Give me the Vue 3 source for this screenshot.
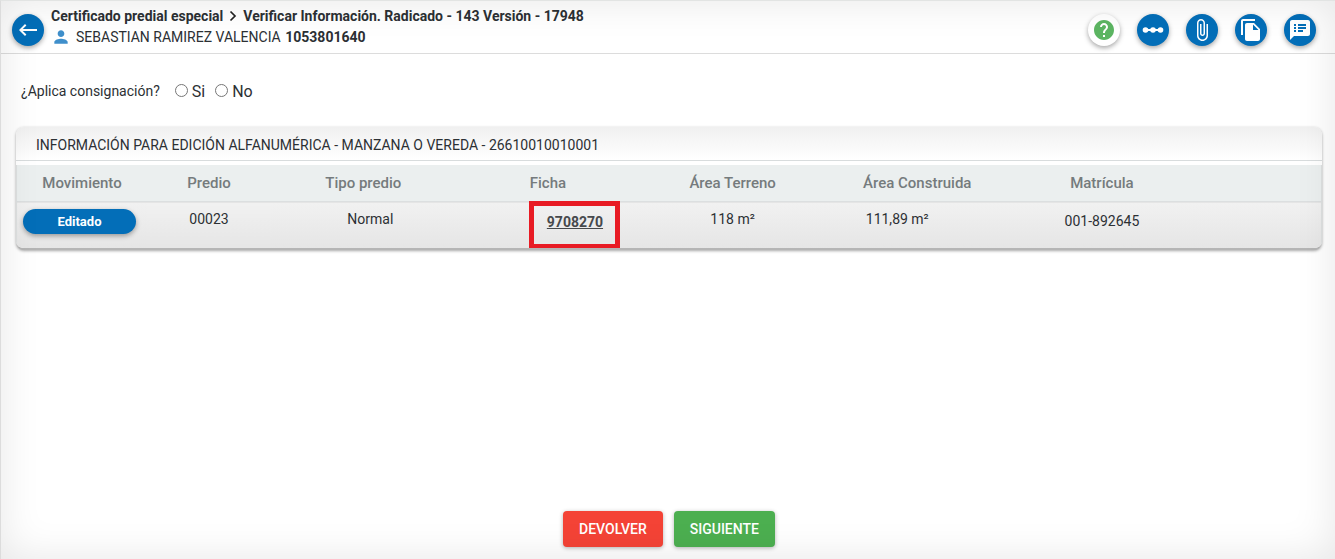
<script setup>
import { ref } from 'vue'

const consignacion = ref('')
const columns = ['Movimiento', 'Predio', 'Tipo predio', 'Ficha', 'Área Terreno', 'Área Construida', 'Matrícula']
const rows = [
  { predio: '00023', tipo: 'Normal', ficha: '9708270', terreno: '118 m²', construida: '111,89 m²', matricula: '001-892645' }
]
</script>

<template>
  <div class="page">
    <header class="topbar">
      <button class="round" type="button" aria-label="Volver">
        <svg width="24" height="24" viewBox="0 0 24 24"><path d="M21 10.900H6.800l3.600-3.500L9 6l-6 6 6 6 1.400-1.400-3.600-3.500H21z" /></svg>
      </button>
      <div class="titles">
        <h1 class="crumbs">
          <span>Certificado predial especial</span>
          <svg width="8" height="12" viewBox="0 0 8 12"><path d="M1.500 1.500L6 6l-4.500 4.500" fill="none" stroke="#222" stroke-width="1.700" /></svg>
          <span>Verificar Información. Radicado - 143 Versión - 17948</span>
        </h1>
        <div class="person">
          <svg width="20" height="20" viewBox="0 0 24 24"><path d="M12 12c2.210 0 4-1.790 4-4s-1.790-4-4-4-4 1.790-4 4 1.790 4 4 4zm0 2c-2.670 0-8 1.340-8 4v2h16v-2c0-2.660-5.330-4-8-4z" /></svg>
          <span>SEBASTIAN RAMIREZ VALENCIA <strong>1053801640</strong></span>
        </div>
      </div>
      <nav class="actions">
        <button class="round help" type="button" aria-label="Ayuda">
          <svg width="24" height="24" viewBox="0 0 24 24"><path d="M12 2C6.480 2 2 6.480 2 12s4.480 10 10 10 10-4.480 10-10S17.520 2 12 2zm1 17h-2v-2h2v2zm2.070-7.750l-.9.920C13.450 12.900 13 13.500 13 15h-2v-.5c0-1.100.45-2.100 1.170-2.830l1.240-1.260c.37-.36.59-.86.59-1.410 0-1.100-.9-2-2-2s-2 .9-2 2H8c0-2.210 1.790-4 4-4s4 1.790 4 4c0 .88-.36 1.680-.93 2.250z" /></svg>
        </button>
        <button class="round" type="button" aria-label="Flujo">
          <svg width="24" height="24" viewBox="0 0 24 24"><path d="M4 11h16v2H4z" /><circle cx="4.500" cy="12" r="2.800" /><circle cx="12" cy="12" r="2.800" /><circle cx="19.500" cy="12" r="2.800" /></svg>
        </button>
        <button class="round" type="button" aria-label="Adjuntos">
          <svg width="24" height="24" viewBox="0 0 24 24"><path d="M16.500 6v11.500c0 2.210-1.790 4-4 4s-4-1.790-4-4V5c0-1.380 1.120-2.500 2.500-2.500s2.500 1.120 2.500 2.500v10.500c0 .55-.45 1-1 1s-1-.45-1-1V6H10v9.500c0 1.380 1.120 2.500 2.500 2.500s2.500-1.120 2.500-2.500V5c0-2.210-1.790-4-4-4S7 2.790 7 5v12.500c0 3.040 2.460 5.500 5.500 5.500s5.500-2.460 5.500-5.500V6h-1.500z" /></svg>
        </button>
        <button class="round" type="button" aria-label="Copias">
          <svg width="24" height="24" viewBox="0 0 24 24"><path d="M16 1H4c-1.100 0-2 .9-2 2v14h2V3h12V1zm-1 4l6 6v10c0 1.100-.9 2-2 2H7.990C6.890 23 6 22.100 6 21l.010-14c0-1.100.89-2 1.990-2h7zm-1 7h5.500L14 6.500V12z" /></svg>
        </button>
        <button class="round" type="button" aria-label="Observaciones">
          <svg width="24" height="24" viewBox="0 0 24 24"><path d="M20 2H4c-1.100 0-1.990.9-1.990 2L2 22l4-4h14c1.100 0 2-.9 2-2V4c0-1.100-.9-2-2-2zM8 14H6v-2h2v2zm0-3H6V9h2v2zm0-3H6V6h2v2zm7 6h-5v-2h5v2zm3-3h-8V9h8v2zm0-3h-8V6h8v2z" /></svg>
        </button>
      </nav>
    </header>

    <main class="content">
      <div class="question" role="radiogroup" aria-labelledby="pregunta">
        <span id="pregunta" class="prompt">¿Aplica consignación?</span>
        <label><input v-model="consignacion" type="radio" name="consignacion" value="si" />Si</label>
        <label><input v-model="consignacion" type="radio" name="consignacion" value="no" />No</label>
      </div>

      <section class="card">
        <h2>INFORMACIÓN PARA EDICIÓN ALFANUMÉRICA - MANZANA O VEREDA - 26610010010001</h2>
        <table>
          <colgroup>
            <col class="w-mov" /><col class="w-pre" /><col class="w-std" /><col class="w-std" />
            <col class="w-std" /><col class="w-std" /><col class="w-std" /><col />
          </colgroup>
          <thead>
            <tr>
              <th v-for="c in columns" :key="c" scope="col">{{ c }}</th>
              <td></td>
            </tr>
          </thead>
          <tbody>
            <tr v-for="r in rows" :key="r.ficha">
              <td class="mov"><button class="pill" type="button">Editado</button></td>
              <td>{{ r.predio }}</td>
              <td class="tipo">{{ r.tipo }}</td>
              <td class="ficha"><a href="#">{{ r.ficha }}</a></td>
              <td>{{ r.terreno }}</td>
              <td class="construida">{{ r.construida }}</td>
              <td class="matricula">{{ r.matricula }}</td>
              <td></td>
            </tr>
          </tbody>
        </table>
      </section>
    </main>

    <footer class="footer">
      <button class="btn back" type="button">DEVOLVER</button>
      <button class="btn next" type="button">SIGUIENTE</button>
    </footer>
  </div>
</template>

<style>
body {
  margin: 0;
  background: #fff;
}
</style>

<style scoped>
.page {
  position: relative;
  box-sizing: border-box;
  min-height: 100vh;
  display: flex;
  flex-direction: column;
  border-left: 1px solid #dcdcdc;
  border-top: 1px solid #e2e4e3;
  font-family: Roboto, "Liberation Sans", sans-serif;
  font-size: 14px;
  color: #2c3034;
}
.page::after {
  content: "";
  position: absolute;
  inset: 0;
  box-shadow: inset 0 0 40px rgba(0, 0, 0, 0.1);
  pointer-events: none;
}
button {
  font-family: inherit;
  border: 0;
  padding: 0;
  cursor: pointer;
}
.topbar {
  display: flex;
  align-items: center;
  height: 52px;
  padding: 0 19px 0 11px;
  border-bottom: 1px solid #dcdcdc;
}
.round {
  display: flex;
  align-items: center;
  justify-content: center;
  flex: none;
  width: 32px;
  height: 32px;
  margin-top: 6px;
  border-radius: 50%;
  background: #036eb8;
  box-shadow: 0 2px 5px rgba(0, 0, 0, 0.35);
}
.round svg {
  fill: #fff;
}
.help {
  background: #fff;
}
.help svg {
  fill: #5cb562;
}
.titles {
  flex: 1;
  padding-left: 7px;
}
.crumbs {
  display: flex;
  align-items: center;
  gap: 6px;
  margin: 0;
  font-size: 14px;
  font-weight: 700;
  line-height: 20px;
}
.person {
  display: flex;
  align-items: center;
  gap: 5px;
  line-height: 22px;
}
.person svg {
  fill: #3f8fcb;
}
.person strong {
  font-weight: 700;
  margin-left: 1px;
}
.actions {
  display: flex;
  gap: 17px;
}
.content {
  flex: 1;
  padding: 25px 13px 0 15px;
}
.question {
  display: flex;
  align-items: center;
  height: 24px;
  padding-left: 5px;
  font-size: 16px;
}
.prompt {
  margin-right: 15px;
  font-size: 14px;
}
.question label {
  display: flex;
  align-items: center;
  margin-right: 10px;
}
.question input {
  width: 13px;
  height: 13px;
  margin: 0 4px 2px 0;
}
.card {
  margin-top: 24px;
  border-radius: 8px;
  background: #fff;
  box-shadow: 0 1px 3px rgba(0, 0, 0, 0.35);
  border-bottom: 2px solid #b5b5b5;
  overflow: hidden;
}
.card h2 {
  margin: 0;
  padding: 3px 20px 0;
  font-size: 14px;
  font-weight: 400;
  line-height: 30px;
  border-bottom: 1px solid #d8dcdd;
  background: linear-gradient(#f0f0f0, #fff);
}
table {
  width: 100%;
  margin-top: 4px;
  table-layout: fixed;
  border-collapse: collapse;
  border-left: 1px solid #dde0e0;
  border-right: 1px solid #dde0e0;
}
.w-mov { width: 10%; }
.w-pre { width: 9.5%; }
.w-std { width: 14.15%; }
thead {
  background: #ebefef;
}
th {
  height: 36px;
  padding: 0;
  font-size: 15px;
  font-weight: 500;
  color: #757b7d;
}
tbody tr {
  border-top: 1px solid #dcdfe0;
  background: linear-gradient(#f1f1f1, #e5e5e5);
}
td {
  padding: 0;
  text-align: center;
}
tbody td {
  height: 36px;
  padding: 7px 0 0;
  vertical-align: top;
  line-height: 20px;
}
tbody td.mov {
  padding: 7px 0 0 6px;
  text-align: left;
}
tbody td.tipo {
  padding-left: 14px;
}
tbody td.ficha {
  padding: 10px 0 0 54px;
}
tbody td.construida {
  padding-right: 40px;
}
tbody td.matricula {
  padding-top: 9px;
}
.pill {
  display: block;
  width: 113px;
  height: 25px;
  border-radius: 13px;
  background: #036eb8;
  color: #fff;
  font-size: 13px;
  font-weight: 700;
  box-shadow: 0 2px 5px rgba(0, 0, 0, 0.35);
}
.ficha a {
  position: relative;
  font-weight: 700;
  color: #46494c;
  text-decoration: underline;
}
.ficha a::after {
  content: "";
  position: absolute;
  z-index: 1;
  inset: -13px -17px -19px -18px;
  border: 5px solid #e81b24;
}
.footer {
  display: flex;
  justify-content: center;
  gap: 11px;
  padding: 0 0 12px 2px;
}
.btn {
  height: 36px;
  padding: 0 16px;
  border-radius: 4px;
  color: #fff;
  font-size: 14px;
  font-weight: 500;
  box-shadow: 0 1px 4px rgba(0, 0, 0, 0.3);
}
.back { background: #f44336; }
.next { background: #4caf50; }
</style>
